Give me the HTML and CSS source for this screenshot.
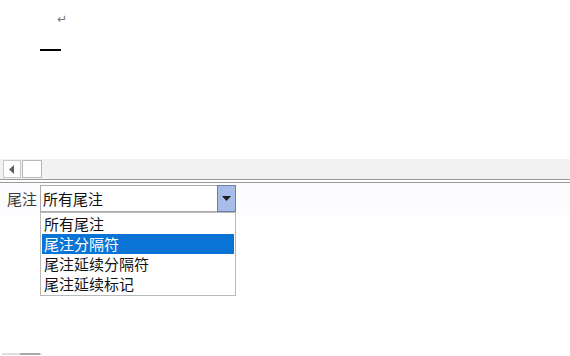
FILE: index.html
```html
<!DOCTYPE html>
<html lang="zh">
<head>
<meta charset="utf-8">
<link rel="stylesheet" href="styles.css">
</head>
<body>
<div class="doc">
  <span class="ret">↵</span>
  <div class="bar"></div>
</div>
<div class="hscroll">
  <div class="sbtn"><svg width="6" height="9" viewBox="0 0 6 9"><path d="M5 0 L0 4.5 L5 9 Z" fill="#606060"/></svg></div>
  <div class="thumb"></div>
</div>
<div class="sep"></div>
<div class="pane">
  <div class="row">
    <span class="label">尾注</span>
    <div class="combo">
      <span class="value">所有尾注</span>
      <span class="dbtn"><svg width="9" height="5" viewBox="0 0 9 5"><path d="M0 0 L9 0 L4.5 5 Z" fill="#202020"/></svg></span>
      <ul class="list">
        <li>所有尾注</li>
        <li class="sel">尾注分隔符</li>
        <li>尾注延续分隔符</li>
        <li>尾注延续标记</li>
      </ul>
    </div>
  </div>
</div>
<div class="rest"></div>
<div class="bottom"><span class="bthumb"></span></div>
</body>
</html>
```
FILE: styles.css
```css
html, body { margin: 0; padding: 0; background: #fff; }
body { width: 570px; height: 356px; overflow: hidden; font-family: "Noto Sans CJK SC", "Microsoft YaHei", sans-serif; color: #1a1a1a; }
.doc { height: 159px; padding-left: 40px; box-sizing: border-box; padding-top: 12px; }
.ret { display: block; margin-left: 17px; font-size: 12px; line-height: 14px; color: #777; font-family: "DejaVu Sans", sans-serif; }
.bar { width: 21px; height: 2px; background: #000; margin-top: 23px; }
.hscroll { height: 20px; background: #f2f2f2; display: flex; align-items: center; padding-left: 3px; box-sizing: border-box; }
.sbtn { width: 18px; height: 18px; box-sizing: border-box; border: 1px solid #c8c8c8; background: #fff; display: flex; align-items: center; justify-content: center; }
.thumb { width: 20px; height: 18px; margin-left: 1px; box-sizing: border-box; border: 1px solid #b8b8b8; background: #fff; }
.sep { height: 4px; border-top: 1px solid #9a9a9a; border-bottom: 1px solid #9a9a9a; box-sizing: border-box; background: #fff; }
.pane { height: 32px; background: #fcfcfe; padding-top: 2px; box-sizing: border-box; }
.row { display: flex; align-items: center; padding-left: 7px; }
.label { font-size: 15px; line-height: 20px; color: #3a3a3a; width: 33px; }
.combo { position: relative; width: 196px; height: 27px; box-sizing: border-box; border: 1px solid #acacac; background: #fff; display: flex; align-items: center; }
.value { flex: 1; font-size: 15px; padding-left: 2px; line-height: 20px; color: #111; }
.dbtn { width: 19px; height: 27px; margin: -1px -1px -1px 0; box-sizing: border-box; border: 1px solid #6b7fa3; background: #a7bce6; display: flex; align-items: center; justify-content: center; }
.list { position: absolute; left: -1px; top: 26px; width: 196px; margin: 0; padding: 1px 1px 1px 1px; list-style: none; box-sizing: border-box; border: 1px solid #b9b9b9; background: #fff; z-index: 2; }
.list li { height: 20px; line-height: 20px; font-size: 15px; padding-left: 2px; color: #111; }
.list li.sel { background: #0a74d6; color: #fff; }
.rest { height: 138px; }
.bottom { height: 2px; position: relative; }
.bthumb { display: block; width: 40px; height: 2px; margin-left: 2px; background: linear-gradient(to right, #ddd 0 18px, #a8a8a8 18px 38px, #ddd 38px); }
```
